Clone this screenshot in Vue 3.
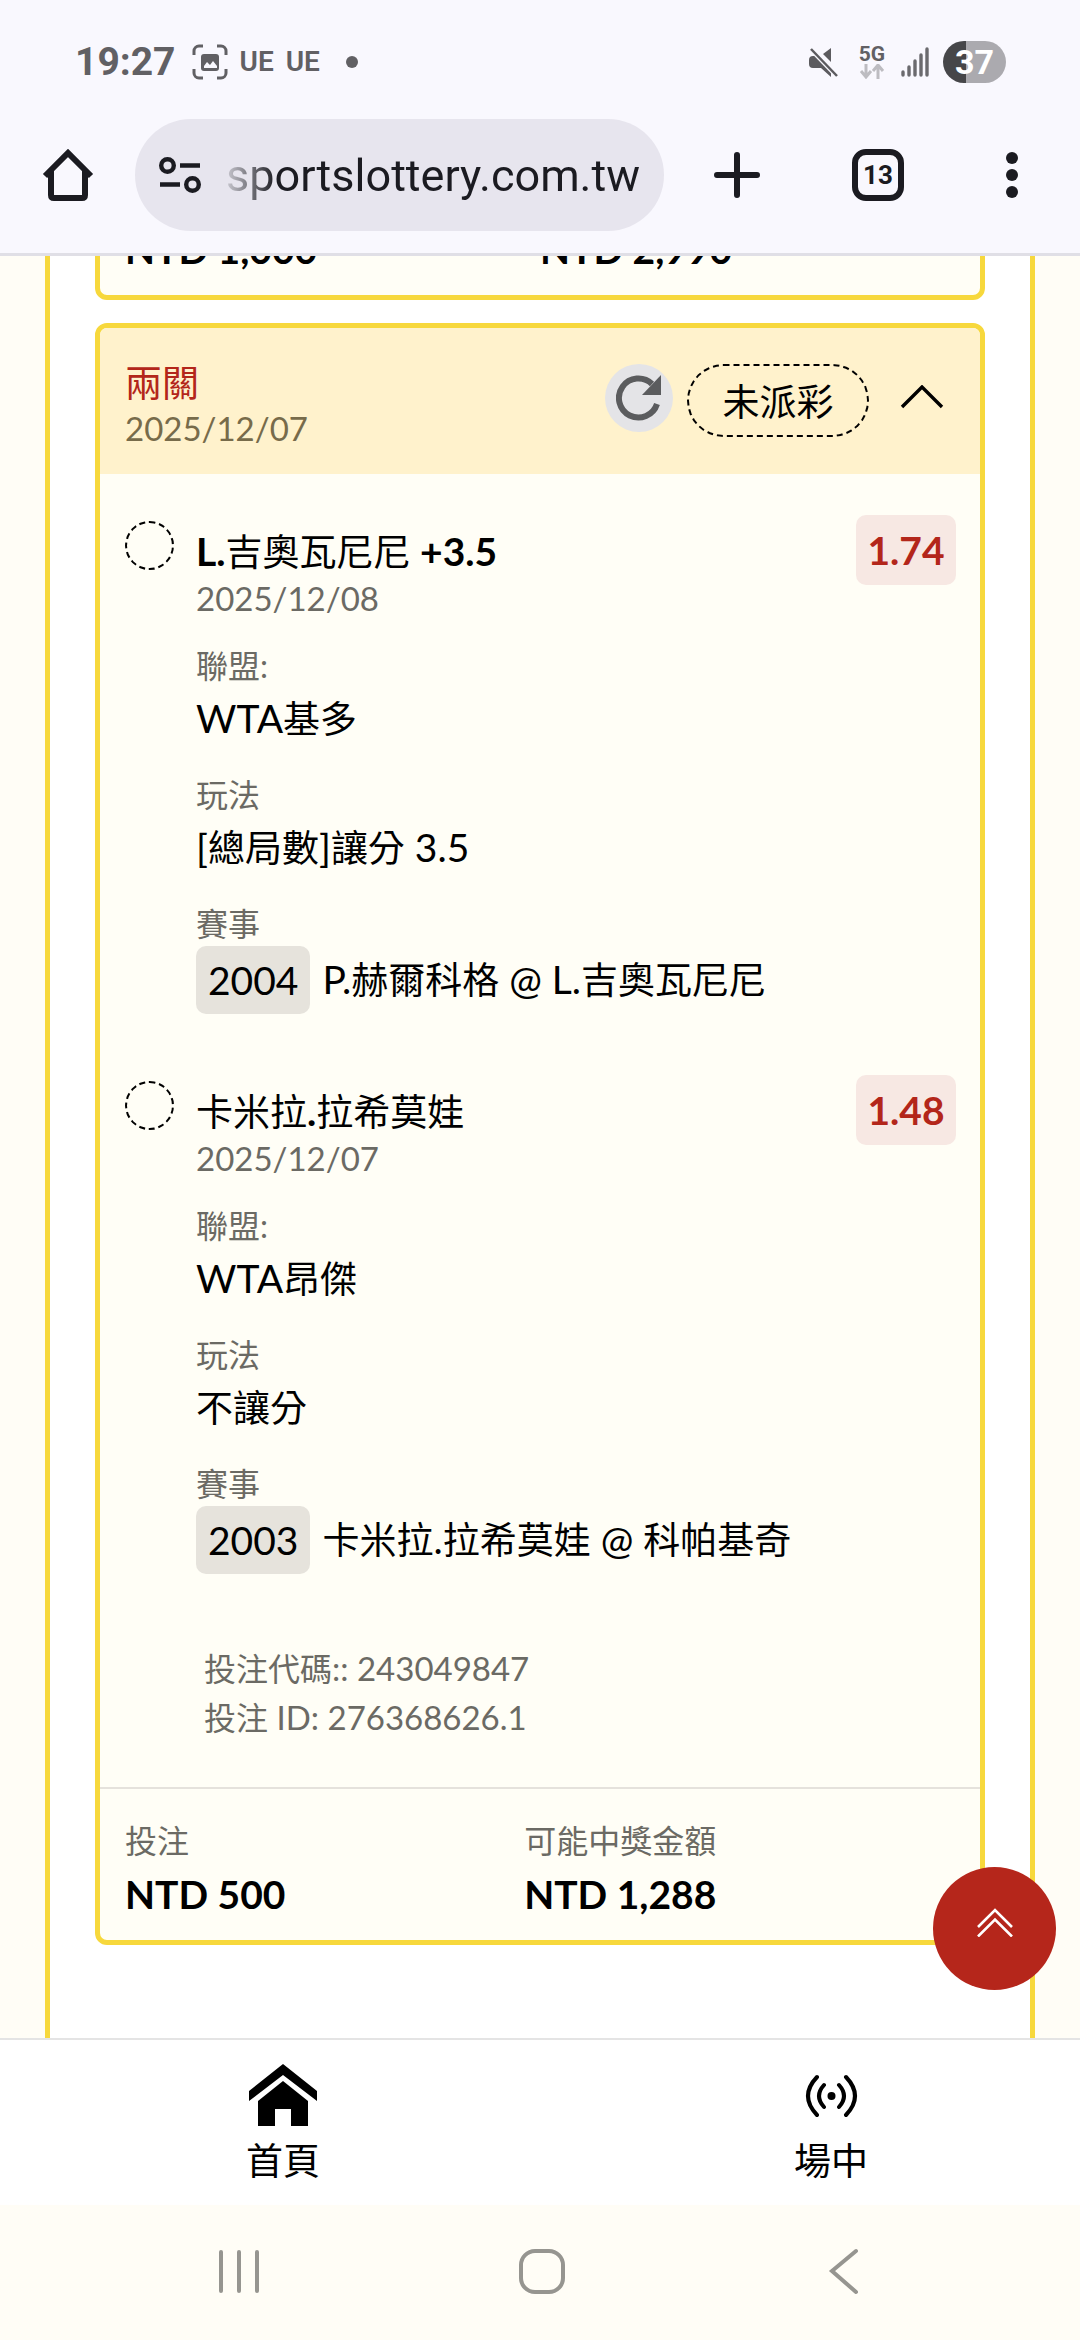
<template>
  <div class="phone">
    <header class="topbar">
      <div class="status">
        <span class="time">19:27</span>
        <svg class="scan" viewBox="0 0 36 36">
          <path d="M2 11V7a5 5 0 0 1 5-5h4M25 2h4a5 5 0 0 1 5 5v4M34 25v4a5 5 0 0 1-5 5h-4M11 34H7a5 5 0 0 1-5-5v-4" fill="none" stroke="#616064" stroke-width="3" />
          <rect x="9" y="10" width="18" height="17" rx="3" fill="#616064" />
          <path d="M12 22l3-4 3 3 3-4 4 5v2H12z" fill="#f9f8fe" />
        </svg>
        <span class="notice">UE</span>
        <span class="notice">UE</span>
        <span class="dot"></span>
        <div class="status-right">
          <svg class="mute" viewBox="0 0 30 30">
            <path d="M22 1v14l-8-8zM0 13q0-4 4-4h3l15 15v6l-10-9H4q-4 0-4-4z" fill="#5c5b5f" />
            <path d="M2 2l26 27" stroke="#f9f8fe" stroke-width="5" />
            <path d="M2 2l26 27" stroke="#5c5b5f" stroke-width="2.5" />
          </svg>
          <div class="network">
            <span>5G</span>
            <svg viewBox="0 0 26 15">
              <path d="M7 0v12M2 7l5 6 5-6M19 15V2M14 7l5-6 5 6" fill="none" stroke="#bdbcc1" stroke-width="3" />
            </svg>
          </div>
          <svg class="signal" viewBox="0 0 28 30">
            <path d="M2 25v3M8 20v8M14 14v14M20 8v20M26 2v26" stroke="#6b6a6e" stroke-width="3.4" stroke-linecap="round" />
          </svg>
          <div class="battery"><span>37</span></div>
        </div>
      </div>

      <div class="browser">
        <button class="tool home" aria-label="首頁">
          <svg viewBox="0 0 52 52">
            <path d="M3 27L26 4l23 23M9 22v24q0 3 3 3h28q3 0 3-3V22" fill="none" stroke="#1b1b21" stroke-width="6" />
          </svg>
        </button>
        <div class="address">
          <svg viewBox="0 0 42 36">
            <g fill="none" stroke="#1b1b21" stroke-width="4.4">
              <circle cx="8.5" cy="8.5" r="6.3" />
              <circle cx="33.5" cy="27.5" r="6.3" />
              <path d="M21 8.5h20M1 27.5h20" />
            </g>
          </svg>
          <span class="url">sportslottery.com.tw</span>
        </div>
        <button class="tool plus" aria-label="新增分頁">
          <svg viewBox="0 0 46 46">
            <path d="M23 3v40M3 23h40" stroke="#1b1b21" stroke-width="6" stroke-linecap="round" />
          </svg>
        </button>
        <button class="tool tabs">13</button>
        <button class="tool more" aria-label="選單">
          <svg viewBox="0 0 12 48">
            <circle cx="6" cy="7" r="6" /><circle cx="6" cy="24" r="6" /><circle cx="6" cy="41" r="6" />
          </svg>
        </button>
      </div>
    </header>

    <main class="page">
      <section class="list">
        <!-- 上一張注單 -->
        <article class="card prev">
          <div class="totals">
            <div class="value strong">NTD 1,000</div>
            <div class="value strong">NTD 2,990</div>
          </div>
        </article>

        <article class="card">
          <div class="card-head">
            <div class="card-title">
              <h2>兩關</h2>
              <div class="date">2025/12/07</div>
            </div>
            <button class="refresh" aria-label="重新整理">
              <svg viewBox="0 0 46 46">
                <path d="M41 29A19.500 19.500 0 1 1 36 9" fill="none" stroke="#5b5c5e" stroke-width="6" />
                <path d="M45 0v20H26z" fill="#5b5c5e" />
              </svg>
            </button>
            <span class="state">未派彩</span>
            <button class="toggle" aria-label="收合" @click="open = !open">
              <svg viewBox="0 0 44 24">
                <path d="M2 22L22 2l20 20" fill="none" stroke="#000" stroke-width="3.4" />
              </svg>
            </button>
          </div>

          <div v-if="open" class="legs">
            <div v-for="leg in legs" :key="leg.code" class="leg">
              <span class="circle"></span>
              <div class="leg-body">
                <h3><span v-for="(run, i) in runs(leg.pick)" :key="i" :class="{ latin: isLatin(run) }">{{ run }}</span></h3>
                <div class="date">{{ leg.date }}</div>
                <div class="field">
                  <div class="label">聯盟:</div>
                  <div class="value"><span v-for="(run, i) in runs(leg.league)" :key="i" :class="{ latin: isLatin(run) }">{{ run }}</span></div>
                </div>
                <div class="field">
                  <div class="label">玩法</div>
                  <div class="value"><span v-for="(run, i) in runs(leg.market)" :key="i" :class="{ latin: isLatin(run) }">{{ run }}</span></div>
                </div>
                <div class="field">
                  <div class="label">賽事</div>
                  <div class="event">
                    <span class="code">{{ leg.code }}</span>
                    <div><span v-for="(run, i) in runs(leg.event)" :key="i" :class="{ latin: isLatin(run) }">{{ run }}</span></div>
                  </div>
                </div>
              </div>
              <span class="odds">{{ leg.odds }}</span>
            </div>
            <div class="ids">
              <div v-for="id in ids" :key="id"><span v-for="(run, i) in runs(id)" :key="i" :class="{ latin: isLatin(run) }">{{ run }}</span></div>
            </div>
          </div>

          <div class="totals line">
            <div>
              <div class="label">投注</div>
              <div class="value strong">NTD 500</div>
            </div>
            <div>
              <div class="label">可能中獎金額</div>
              <div class="value strong">NTD 1,288</div>
            </div>
          </div>
        </article>
      </section>
    </main>

    <nav class="tabbar">
      <a href="#">
        <svg viewBox="0 0 68 62">
          <path d="M34 0l34 27v10L34 11 0 37V27z" />
          <path d="M34 17l25 20v25H42V45H26v17H9V37z" />
        </svg>
        <span>首頁</span>
      </a>
      <a href="#">
        <svg viewBox="0 0 68 62">
          <g fill="none" stroke="#000" stroke-width="4" stroke-linecap="round">
            <path d="M20 13q-18 19 0 38M49 13q18 19 0 38M27 21q-10 11 0 22M42 21q10 11 0 22" />
          </g>
          <circle cx="34.5" cy="32" r="4" />
        </svg>
        <span>場中</span>
      </a>
    </nav>

    <div class="system">
      <button aria-label="最近">
        <svg viewBox="0 0 48 48"><path d="M6 5v39M24 5v39M42 5v39" /></svg>
      </button>
      <button aria-label="主畫面">
        <svg viewBox="0 0 48 48"><rect x="3" y="4" width="42" height="41" rx="14" /></svg>
      </button>
      <button aria-label="返回">
        <svg viewBox="0 0 48 48"><path d="M36 4L12 24l24 21" /></svg>
      </button>
    </div>

    <button class="to-top" aria-label="回頂端" @click="toTop">
      <svg viewBox="0 0 36 30">
        <path d="M1 20L18 3l17 17M1 29.500L18 12.500l17 17" fill="none" stroke="#fff" stroke-width="2.6" />
      </svg>
    </button>
  </div>
</template>

<script setup>
import { ref, reactive } from 'vue'

const open = ref(true)

const ids = ['投注代碼:: 243049847', '投注 ID: 276368626.1']

const legs = reactive([
  {
    pick: 'L.吉奧瓦尼尼 +3.5',
    date: '2025/12/08',
    league: 'WTA基多',
    market: '[總局數]讓分 3.5',
    code: '2004',
    event: 'P.赫爾科格 @ L.吉奧瓦尼尼',
    odds: '1.74'
  },
  {
    pick: '卡米拉.拉希莫娃',
    date: '2025/12/07',
    league: 'WTA昂傑',
    market: '不讓分',
    code: '2003',
    event: '卡米拉.拉希莫娃 @ 科帕基奇',
    odds: '1.48'
  }
])

// 英數字的字級比中文大一點，先把文字拆成中文段與英數段
function runs(text) {
  return text.match(/[\x20-\x7e]+|[^\x20-\x7e]+/g) || []
}

function isLatin(run) {
  return /^[\x20-\x7e]/.test(run)
}

// 回到頁面頂端
function toTop() {
  window.scrollTo({ top: 0, behavior: 'smooth' })
}
</script>

<style>
body {
  background: #fffdf6;
}
</style>

<style scoped>
.phone {
  min-height: 100vh;
  display: flex;
  flex-direction: column;
  font-family: Lato, 'Noto Sans CJK TC', sans-serif;
  font-size: 37px;
  color: #000;
}

button {
  border: none;
  padding: 0;
  background: none;
  font: inherit;
  color: inherit;
}

svg {
  display: block;
}

h2,
h3 {
  margin: 0;
}

/* 狀態列與網址列 */
.topbar {
  background: #f9f8fe;
  border-bottom: 3px solid #e0dfe6;
  font-family: Roboto, sans-serif;
}

.status {
  height: 119px;
  padding: 4px 74px 0 75px;
  box-sizing: border-box;
  display: flex;
  align-items: center;
  color: #616064;
}

.time {
  font-size: 39px;
  font-weight: 700;
}

.scan {
  width: 36px;
  height: 36px;
  margin: 0 12px 0 16px;
}

.notice {
  margin-right: 12px;
  font-size: 28px;
  font-weight: 600;
}

.dot {
  width: 12px;
  height: 12px;
  margin-left: 14px;
  border-radius: 50%;
  background: #616064;
}

.status-right {
  margin-left: auto;
  display: flex;
  align-items: center;
}

.mute {
  width: 30px;
  height: 30px;
}

.network {
  margin: 0 16px 0 20px;
  font-size: 21px;
  font-weight: 700;
  line-height: 20px;
}

.network svg {
  width: 26px;
  height: 15px;
}

.signal {
  width: 28px;
  height: 30px;
}

.battery {
  width: 63px;
  height: 42px;
  margin-left: 14px;
  border-radius: 21px;
  background: linear-gradient(90deg, #464649 37%, #abaaaf 37%);
  color: #fff;
  font-size: 34px;
  font-weight: 700;
  line-height: 43px;
  text-align: center;
}

.browser {
  height: 134px;
  padding: 0 62px 0 42px;
  display: flex;
  align-items: flex-start;
}

.tool {
  height: 112px;
  display: flex;
  align-items: center;
  color: #1b1b21;
}

.home svg {
  width: 52px;
  height: 52px;
}

.address {
  flex: 1;
  height: 112px;
  margin: 0 50px 0 41px;
  padding: 0 24px;
  box-sizing: border-box;
  border-radius: 56px;
  background: #e7e5ee;
  display: flex;
  align-items: center;
  justify-content: space-between;
}

.address svg {
  width: 42px;
  height: 36px;
}

.url {
  font-size: 45px;
  color: transparent;
  background: linear-gradient(90deg, #c9c8d0, #1b1b21 50px);
  background-clip: text;
}

.plus svg {
  width: 46px;
  height: 46px;
}

.tabs {
  width: 52px;
  height: 52px;
  margin: 30px 102px 0 92px;
  box-sizing: border-box;
  border: 6px solid #1b1b21;
  border-radius: 14px;
  justify-content: center;
  font-size: 26px;
  font-weight: 700;
}

.more svg {
  width: 12px;
  height: 48px;
  fill: #1b1b21;
}

/* 注單列表 */
.page {
  flex: 1;
  padding: 0 45px;
  overflow: hidden;
  display: flex;
}

.list {
  flex: 1;
  padding: 0 45px;
  border: solid #f7d83c;
  border-width: 0 5px;
  background: #fff;
}

.card {
  margin-bottom: 23px;
  border: 5px solid #f7d83c;
  border-radius: 12px;
  background: #fffef6;
}

.prev {
  margin-top: -43px;
}

.card-head {
  height: 146px;
  padding: 33px 36px 0 25px;
  box-sizing: border-box;
  border-radius: 7px 7px 0 0;
  background: #fff2cc;
  display: flex;
  align-items: flex-start;
}

.card-title {
  flex: 1;
}

.card-title h2 {
  color: #b3261a;
  font-size: 37px;
  font-weight: 400;
  line-height: 44px;
}

.date {
  color: #6b6a64;
  font-size: 33px;
  line-height: 46px;
}

.card-head .date {
  color: #776b4a;
}

.refresh {
  width: 68px;
  height: 68px;
  margin: 3px 14px 0 0;
  border-radius: 50%;
  background: #e4e4e7;
  display: flex;
  align-items: center;
  justify-content: center;
}

.refresh svg {
  width: 46px;
  height: 46px;
}

.state {
  width: 182px;
  height: 73px;
  margin-top: 3px;
  box-sizing: border-box;
  border: 2px dashed #000;
  border-radius: 37px;
  line-height: 71px;
  text-align: center;
}

.toggle {
  margin: 24px 0 0 31px;
}

.toggle svg {
  width: 44px;
  height: 24px;
}

.legs {
  padding: 41px 24px 45px 25px;
}

.leg {
  display: flex;
  align-items: flex-start;
  margin-bottom: 61px;
}

.circle {
  width: 49px;
  height: 49px;
  margin-top: 6px;
  box-sizing: border-box;
  border: 2px dashed #000;
  border-radius: 50%;
}

.leg-body {
  flex: 1;
  margin-left: 22px;
  padding-top: 14px;
}

.leg-body h3 {
  font-size: 37px;
  font-weight: 400;
  line-height: 46px;
}

.leg-body h3 .latin {
  font-weight: 700;
}

.latin {
  font-size: 39px;
  line-height: 39px;
}

.field {
  margin-top: 23px;
}

.label {
  color: #6b6a64;
  font-size: 32px;
  line-height: 44px;
}

.value {
  line-height: 62px;
}

.strong {
  font-size: 39px;
  font-weight: 700;
}

.event {
  display: flex;
  align-items: center;
  gap: 12px;
  line-height: 68px;
}

.code {
  padding: 0 12px;
  border-radius: 10px;
  background: #e6e3dc;
  font-size: 39px;
}

.odds {
  width: 100px;
  border-radius: 10px;
  background: #f7e8e3;
  color: #b3261a;
  font-size: 39px;
  font-weight: 700;
  line-height: 70px;
  text-align: center;
}

.ids {
  padding: 9px 0 0 79px;
  color: #6b6a64;
  font-size: 32px;
  line-height: 49px;
}

.ids .latin {
  font-size: 33px;
}

.totals {
  padding: 0 25px 15px;
  display: grid;
  grid-template-columns: auto auto;
}

.line {
  padding-top: 30px;
  border-top: 2px solid #e5e2dc;
}

.to-top {
  position: fixed;
  right: 24px;
  bottom: 350px;
  width: 123px;
  height: 123px;
  border-radius: 50%;
  background: #b5261b;
  display: flex;
  align-items: center;
  justify-content: center;
}

.to-top svg {
  width: 36px;
  height: 30px;
  margin-bottom: 14px;
}

/* 底部選單 */
.tabbar {
  height: 167px;
  padding: 24px 212px 0 246px;
  box-sizing: border-box;
  border-top: 2px solid #e4e4e4;
  background: #fff;
  display: flex;
  justify-content: space-between;
}

.tabbar a {
  color: #000;
  text-decoration: none;
  line-height: 54px;
}

.tabbar svg {
  width: 68px;
  height: 62px;
  margin: 0 auto 8px;
}

.system {
  height: 135px;
  padding: 0 212px 3px 215px;
  box-sizing: border-box;
  background: #fffdf6;
  display: flex;
  align-items: center;
  justify-content: space-between;
}

.system svg {
  width: 48px;
  height: 48px;
  fill: none;
  stroke: #969590;
  stroke-width: 4;
  stroke-linecap: round;
}
</style>
